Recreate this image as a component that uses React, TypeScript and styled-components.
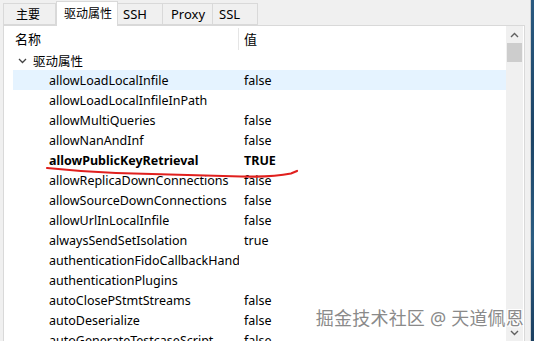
import React from 'react';
import styled, { createGlobalStyle } from 'styled-components';

const GlobalStyle = createGlobalStyle`
	html, body {
		margin: 0;
		padding: 0;
		background: #f0f0f0;
	}
	body {
		font-family: 'Noto Sans', 'Noto Sans CJK SC', sans-serif;
		color: #000;
	}
`;

type Prop = { name: string; value?: string; bold?: boolean; hover?: boolean };

const props: Prop[] = [
	{ name: 'allowLoadLocalInfile', value: 'false', hover: true },
	{ name: 'allowLoadLocalInfileInPath' },
	{ name: 'allowMultiQueries', value: 'false' },
	{ name: 'allowNanAndInf', value: 'false' },
	{ name: 'allowPublicKeyRetrieval', value: 'TRUE', bold: true },
	{ name: 'allowReplicaDownConnections', value: 'false' },
	{ name: 'allowSourceDownConnections', value: 'false' },
	{ name: 'allowUrlInLocalInfile', value: 'false' },
	{ name: 'alwaysSendSetIsolation', value: 'true' },
	{ name: 'authenticationFidoCallbackHandler' },
	{ name: 'authenticationPlugins' },
	{ name: 'autoClosePStmtStreams', value: 'false' },
	{ name: 'autoDeserialize', value: 'false' },
	{ name: 'autoGenerateTestcaseScript', value: 'false' },
];

const tabs = [
	{ label: '主要', width: 53, pad: 12, size: 12 },
	{ label: '驱动属性', width: 62, pad: 7, size: 12, active: true },
	{ label: 'SSH', width: 45, pad: 5, size: 13 },
	{ label: 'Proxy', width: 50, pad: 8, size: 13 },
	{ label: 'SSL', width: 45, pad: 6, size: 13 },
];

const App = (): React.FunctionComponentElement<JSX.Element> => {
	return (
		<>
			<GlobalStyle />
			<Screen>
				<Dialog>
					<TabBar>
						{tabs.map((t, i) => (
							<Tab
								key={t.label}
								$active={t.active}
								$first={i === 0}
								$width={t.width}
								$pad={t.pad}
								$size={t.size}
							>
								{t.label}
							</Tab>
						))}
					</TabBar>
					<Panel>
						<Grid>
							<Header>
								<HeadCell>名称</HeadCell>
								<HeadCell $value>值</HeadCell>
							</Header>
							<GroupRow>
								<svg width='9' height='6' viewBox='0 0 9 6'>
									<path d='M1 1 L4.5 4.5 L8 1' fill='none' stroke='#444' strokeWidth='1.3' />
								</svg>
								驱动属性
							</GroupRow>
							{props.map(p => (
								<Row key={p.name} $hover={p.hover} $bold={p.bold}>
									<NameCell>{p.name}</NameCell>
									<ValueCell>{p.value}</ValueCell>
								</Row>
							))}
							<Scribble width='260' height='16' viewBox='0 0 260 16'>
								<path
									d='M1 2 C 20 4, 45 6, 70 7 C 120 8.5, 160 9.5, 195 10.5 C 215 11, 230 10.5, 245 7.5 L 251 5'
									fill='none'
									stroke='#e0201e'
									strokeWidth='2.2'
									strokeLinecap='round'
								/>
							</Scribble>
						</Grid>
						<ScrollBar>
							<Arrow>
								<svg width='9' height='6' viewBox='0 0 9 6'>
									<path d='M1 5 L4.5 1.5 L8 5' fill='none' stroke='#606060' strokeWidth='1.4' />
								</svg>
							</Arrow>
							<Thumb />
							<Track />
							<Arrow>
								<svg width='9' height='6' viewBox='0 0 9 6'>
									<path d='M1 1 L4.5 4.5 L8 1' fill='none' stroke='#606060' strokeWidth='1.4' />
								</svg>
							</Arrow>
						</ScrollBar>
					</Panel>
					<Watermark>掘金技术社区 @ 天道佩恩</Watermark>
				</Dialog>
				<Desktop />
			</Screen>
		</>
	);
};

const Screen = styled.div`
	display: flex;
	width: 534px;
	height: 341px;
	overflow: hidden;
`;

const Dialog = styled.div`
	position: relative;
	flex: 1;
	display: flex;
	flex-direction: column;
	padding: 0 5px 0 3px;
	border-right: 1px solid #d0d0d0;
`;

const Desktop = styled.div`
	width: 3px;
	background: linear-gradient(#2a5a80, #1c4466 40%, #2b5d82 70%, #1b3f60);
`;

const TabBar = styled.div`
	display: flex;
	align-items: flex-end;
	height: 25px;
	flex-shrink: 0;
`;

const Tab = styled.div<{ $active?: boolean; $first?: boolean; $width: number; $pad: number; $size: number }>`
	box-sizing: border-box;
	width: ${p => p.$width}px;
	height: ${p => (p.$active ? '25px' : '22px')};
	padding: ${p => (p.$active ? `0 0 3px ${p.$pad}px` : `0 0 0 ${p.$pad}px`)};
	margin-bottom: ${p => (p.$active ? '-1px' : '0')};
	display: flex;
	align-items: center;
	font-size: ${p => p.$size}px;
	white-space: nowrap;
	background: ${p => (p.$active ? '#fff' : '#f0f0f0')};
	border: 1px solid #d9d9d9;
	border-bottom: ${p => (p.$active ? 'none' : '1px solid #d9d9d9')};
	border-left: ${p => (p.$active || p.$first ? '1px solid #d9d9d9' : 'none')};
	position: relative;
	z-index: ${p => (p.$active ? 1 : 0)};
`;

const Panel = styled.div`
	flex: 1;
	display: flex;
	background: #fff;
	border: 1px solid #d9d9d9;
	border-bottom: none;
	min-height: 0;
`;

const Grid = styled.div`
	position: relative;
	flex: 1;
	display: flex;
	flex-direction: column;
	padding: 1px 0 0 8px;
	overflow: hidden;
`;

const Header = styled.div`
	display: grid;
	grid-template-columns: 226px 1fr;
	height: 23px;
	align-items: center;
	font-size: 13px;
	flex-shrink: 0;
`;

const HeadCell = styled.div<{ $value?: boolean }>`
	padding-left: ${p => (p.$value ? '5px' : '3px')};
	height: 22px;
	line-height: 22px;
	border-left: ${p => (p.$value ? '1px solid #e5e5e5' : 'none')};
`;

const GroupRow = styled.div`
	display: flex;
	align-items: center;
	gap: 6px;
	height: 20px;
	padding-left: 6px;
	font-size: 12.5px;
	flex-shrink: 0;
	svg {
		margin-top: 1px;
	}
`;

const Row = styled.div<{ $hover?: boolean; $bold?: boolean }>`
	display: grid;
	grid-template-columns: 226px 1fr;
	height: 20px;
	align-items: center;
	font-size: 12.5px;
	font-weight: ${p => (p.$bold ? 700 : 400)};
	background: ${p => (p.$hover ? '#e5f3ff' : 'transparent')};
	margin-left: 1px;
	flex-shrink: 0;
`;

const NameCell = styled.div`
	padding-left: 36px;
	white-space: nowrap;
	overflow: hidden;
`;

const ValueCell = styled.div`
	padding-left: 5px;
	white-space: nowrap;
`;

const Scribble = styled.svg`
	position: absolute;
	left: 42px;
	top: 140px;
`;

const ScrollBar = styled.div`
	width: 17px;
	display: flex;
	flex-direction: column;
	background: #f0f0f0;
	margin-right: 1px;
`;

const Arrow = styled.div`
	height: 17px;
	display: flex;
	align-items: center;
	justify-content: center;
	flex-shrink: 0;
`;

const Thumb = styled.div`
	height: 19px;
	margin: 0 1px;
	background: #cdcdcd;
	flex-shrink: 0;
`;

const Track = styled.div`
	flex: 1;
`;

const Watermark = styled.div`
	position: absolute;
	right: 6px;
	bottom: 11px;
	font-size: 18px;
	letter-spacing: 0.2px;
	color: #8a8a8a;
	text-shadow: 1px 1px 0 #fff, -1px -1px 0 #fff, 1px -1px 0 #fff, -1px 1px 0 #fff;
	white-space: nowrap;
`;

export default App;
